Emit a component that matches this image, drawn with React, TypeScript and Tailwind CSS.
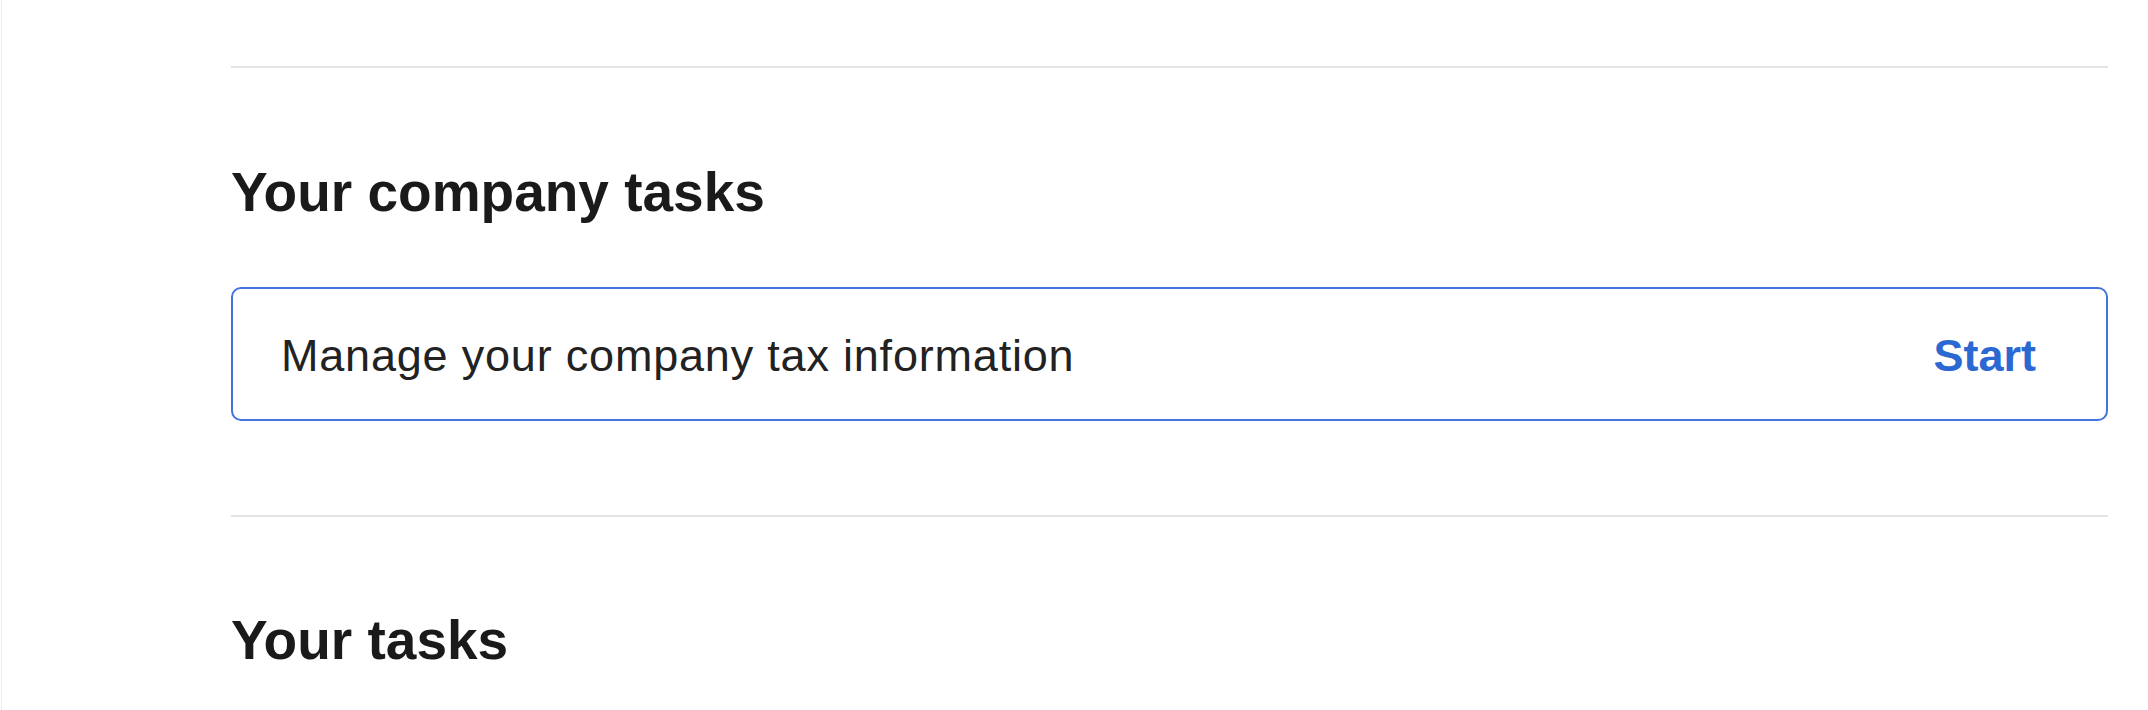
export default function App() {
  return (
    <div className="min-h-[710px] w-full bg-white border-l border-[#ececec] ml-[1px]" style={{ fontFamily: '"Liberation Sans", Arial, sans-serif' }}>
      <div className="pl-[229px] pr-[41px] pt-[66px]">
        {/* Divider */}
        <div className="h-[2px] bg-[#e4e4e7]" />

        {/* Company tasks */}
        <section className="pt-[94px]">
          <h2 className="text-[55px] leading-[60px] font-bold text-[#1a1a1a]">Your company tasks</h2>
          <div className="mt-[65px] h-[134px] rounded-[10px] border-2 border-[#4274db] flex items-center justify-between pl-[48px] pr-[70px]">
            <span className="text-[45px] leading-[52px] pt-[3px] text-[#222222] tracking-[0.8px]">Manage your company tax information</span>
            <button className="text-[45px] leading-[52px] pt-[3px] font-bold text-[#2c68d1]">Start</button>
          </div>
        </section>

        {/* Divider */}
        <div className="mt-[94px] h-[2px] bg-[#e4e4e7]" />

        {/* Personal tasks */}
        <section className="pt-[93px]">
          <h2 className="text-[55px] leading-[60px] font-bold text-[#1a1a1a]">Your tasks</h2>
        </section>
      </div>
    </div>
  )
}
